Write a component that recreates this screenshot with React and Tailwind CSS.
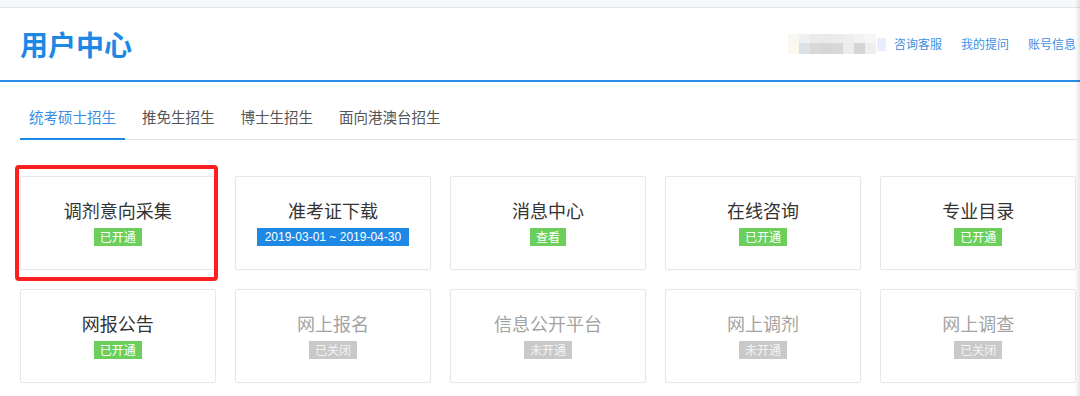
import { useState } from "react";

const tabs = ["统考硕士招生", "推免生招生", "博士生招生", "面向港澳台招生"];

const cards = [
  { title: "调剂意向采集", badge: "已开通", type: "green", marked: true },
  { title: "准考证下载", badge: "2019-03-01 ~ 2019-04-30", type: "blue" },
  { title: "消息中心", badge: "查看", type: "green" },
  { title: "在线咨询", badge: "已开通", type: "green" },
  { title: "专业目录", badge: "已开通", type: "green" },
  { title: "网报公告", badge: "已开通", type: "green" },
  { title: "网上报名", badge: "已关闭", type: "gray" },
  { title: "信息公开平台", badge: "未开通", type: "gray" },
  { title: "网上调剂", badge: "未开通", type: "gray" },
  { title: "网上调查", badge: "已关闭", type: "gray" },
];

const blurTop = ["#f9f7f2", "#eef0f2", "#ebebeb", "#eaeaea", "#ececec", "#eeeeee", "#f2f2f2", "#f6f6f6"];
const blurBottom = ["#fbf8f0", "#dce3e8", "#d8d8d8", "#d6d6d6", "#d8d8d8", "#ececec", "#d5d5d5", "#eeeeee"];

function Badge({ text, type }) {
  if (type === "blue") {
    return (
      <span className="bg-[#1e88e5] text-white text-[12px] leading-[18px] px-2 font-['Liberation_Sans',Arial,sans-serif]">
        {text}
      </span>
    );
  }
  if (type === "gray") {
    return (
      <span className="bg-[#c9c9c9] text-[#f4f4f4] text-[12px] leading-[18px] px-[6px]">
        {text}
      </span>
    );
  }
  return (
    <span className="bg-[#6ccf5c] text-white text-[12px] leading-[18px] px-[6px]">
      {text}
    </span>
  );
}

function Card({ card }) {
  const off = card.type === "gray";
  return (
    <div className="relative h-[94px] pb-[3px] bg-white border border-[#e8e8e8] rounded-[2px] shadow-[0_0_2px_rgba(0,0,0,0.04)] flex flex-col items-center justify-center">
      <p className={`text-[18px] leading-[24px] ${off ? "text-[#a3a3a3]" : "text-[#333]"}`}>
        {card.title}
      </p>
      <div className="mt-[6px] flex">
        <Badge text={card.badge} type={card.type} />
      </div>
      {card.marked && (
        <div className="absolute left-[-6px] top-[-12px] w-[203px] h-[116px] border-[4px] border-[#ff1f1f] rounded-[4px] pointer-events-none" />
      )}
    </div>
  );
}

export default function App() {
  const [active, setActive] = useState(0);

  return (
    <div className="relative w-[1080px] h-[396px] overflow-hidden bg-white font-['Noto_Sans_CJK_SC','Noto_Sans',sans-serif]">
      <div className="h-[8px] bg-[#f7f8fa] border-b border-[#e2e2e2]" />

      <div className="h-[74px] flex items-center border-b-2 border-[#2b8ce8] pl-[20px] pr-[4px]">
        <h1 className="text-[28px] font-bold text-[#1e88e5] leading-none">用户中心</h1>
        <div className="ml-auto flex items-center">
          <div className="flex flex-col blur-[0.6px]">
            <div className="flex">
              {blurTop.map((c, i) => (
                <div key={i} className="w-[11px] h-[9px]" style={{ background: c }} />
              ))}
            </div>
            <div className="flex">
              {blurBottom.map((c, i) => (
                <div key={i} className="w-[11px] h-[11px]" style={{ background: c }} />
              ))}
            </div>
          </div>
          <div className="ml-[1px] w-[9px] h-[13px] bg-[#e8effc] blur-[0.5px]" />
          <nav className="ml-[8px] flex gap-[19px] text-[12px] text-[#3d8fe2]">
            <a>咨询客服</a>
            <a>我的提问</a>
            <a>账号信息</a>
          </nav>
        </div>
      </div>

      <div className="mt-[14px] ml-[20px] mr-[3px] flex gap-[8px] border-b border-[#e4e4e4]">
        {tabs.map((t, i) => (
          <button
            key={t}
            onClick={() => setActive(i)}
            className={`h-[44px] px-[9px] -mb-px text-[14.5px] ${
              active === i
                ? "text-[#3a8ee6] border-b-2 border-[#1e88e5]"
                : "text-[#555] border-b-2 border-transparent"
            }`}
          >
            {t}
          </button>
        ))}
      </div>

      <div className="mt-[36px] ml-[20px] mr-[4px] grid grid-cols-5 gap-x-[19.5px] gap-y-[19px]">
        {cards.map((c) => (
          <Card key={c.title} card={c} />
        ))}
      </div>

      <div className="absolute top-0 right-0 w-[5px] h-full bg-gradient-to-r from-transparent to-black/10" />
    </div>
  );
}
